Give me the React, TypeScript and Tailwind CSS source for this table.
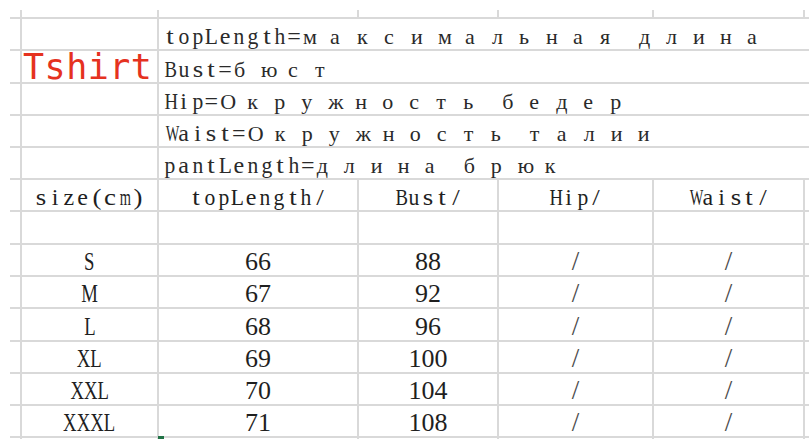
import React from "react";

const info = [
  ["topLength=", "максимальная длина"],
  ["Bust=", "бюст"],
  ["Hip=", "Окружность бедер"],
  ["Waist=", "Окружность талии"],
  ["pantLength=", "длина брюк"],
];

const sizes = [
  ["S", "66", "88"],
  ["M", "67", "92"],
  ["L", "68", "96"],
  ["XL", "69", "100"],
  ["XXL", "70", "104"],
  ["XXXL", "71", "108"],
];

const xwide = "WMmw";
const wide = "HBNDGKRUVXACOQ";
const mid = "LEFPTSZhnubdpqgko";
const thin = "ts()/rfc";

const squeeze = (ch: string) => {
  if (xwide.includes(ch)) return "scale-x-[0.6]";
  if (wide.includes(ch)) return "scale-x-[0.78]";
  if (mid.includes(ch)) return "scale-x-[0.9]";
  if (thin.includes(ch)) return "scale-x-[1.12]";
  return "";
};

// serif text laid out on a fixed half/full width grid, like SimSun in the sheet
const Sim = ({ text }: { text: string }) => (
  <span className="whitespace-nowrap font-['Liberation_Serif',serif] text-[24px] leading-none">
    {text.split("").map((ch, i) => {
      if (ch === " ") return <span key={i} className="inline-block w-[12px]">&nbsp;</span>;
      if (/[\u0400-\u04FF]/.test(ch))
        return (
          <span key={i} className="inline-block w-[27px] pl-[2px] text-left text-[22px]">
            {ch}
          </span>
        );
      return (
        <span key={i} className={`inline-block w-[13.8px] text-center ${squeeze(ch)}`}>
          {ch}
        </span>
      );
    })}
  </span>
);

const Cell = ({ className = "", children }: { className?: string; children?: React.ReactNode }) => (
  <div className={`bg-white ${className}`}>{children}</div>
);

const blankRow = (k: string) =>
  Array.from({ length: 7 }).map((_, i) => <Cell key={k + i} />);

const App = () => {
  return (
    <div className="h-[439px] w-[809px] overflow-hidden bg-white pl-[10px] pt-[10px]">
      <div className="grid grid-cols-[10px_135px_198px_138px_153px_149px_20px] grid-rows-[7px_30px_31px_30px_30px_30px_30px_31px_30px_30px_31px_30px_30px_30px_10px] gap-[2px] bg-[#d9d9d9] text-[#1f1f1f]">
        {/* partial top row */}
        {blankRow("top")}

        {/* notes section */}
        {info.map(([en, ru], i) => (
          <React.Fragment key={en}>
            <Cell />
            <Cell className="flex items-end pl-[1px]">
              {i === 1 && (
                <span className="mb-[-3px] font-['DejaVu_Sans_Mono',monospace] text-[35px] leading-none tracking-[0.5px] text-[#e5321f]">
                  Tshirt
                </span>
              )}
            </Cell>
            <Cell className="col-span-5 flex items-end pb-[1px] pl-[4px] text-[#2a2a2a]">
              <Sim text={en + ru} />
            </Cell>
          </React.Fragment>
        ))}

        {/* header row */}
        <Cell />
        {["size(cm)", "topLength/", "Bust/", "Hip/", "Waist/"].map((h) => (
          <Cell key={h} className="flex items-end justify-center pb-[1px]">
            <Sim text={h} />
          </Cell>
        ))}
        <Cell />

        {blankRow("empty")}

        {/* size rows */}
        {sizes.map(([s, len, bust]) => (
          <React.Fragment key={s}>
            <Cell />
            <Cell className="flex items-end justify-center font-['Liberation_Serif',serif] text-[26px] leading-none">
              <span className="inline-block scale-x-[0.72]">{s}</span>
            </Cell>
            <Cell className="flex items-end justify-center font-['Liberation_Serif',serif] text-[26px] leading-none">
              {len}
            </Cell>
            <Cell className="flex items-end justify-center font-['Liberation_Serif',serif] text-[26px] leading-none">
              {bust}
            </Cell>
            <Cell className="flex items-end justify-center font-['Liberation_Serif',serif] text-[27px] leading-none text-[#4a4a4a]">
              /
            </Cell>
            <Cell className="flex items-end justify-center font-['Liberation_Serif',serif] text-[27px] leading-none text-[#4a4a4a]">
              /
            </Cell>
            <Cell />
          </React.Fragment>
        ))}

        {/* partial bottom row */}
        <Cell />
        <Cell />
        <Cell className="relative">
          <div className="absolute -left-[1px] -top-[2px] h-[4px] w-[6px] bg-[#217346]" />
        </Cell>
        <Cell />
        <Cell />
        <Cell />
        <Cell />
      </div>
    </div>
  );
};

export default App;
